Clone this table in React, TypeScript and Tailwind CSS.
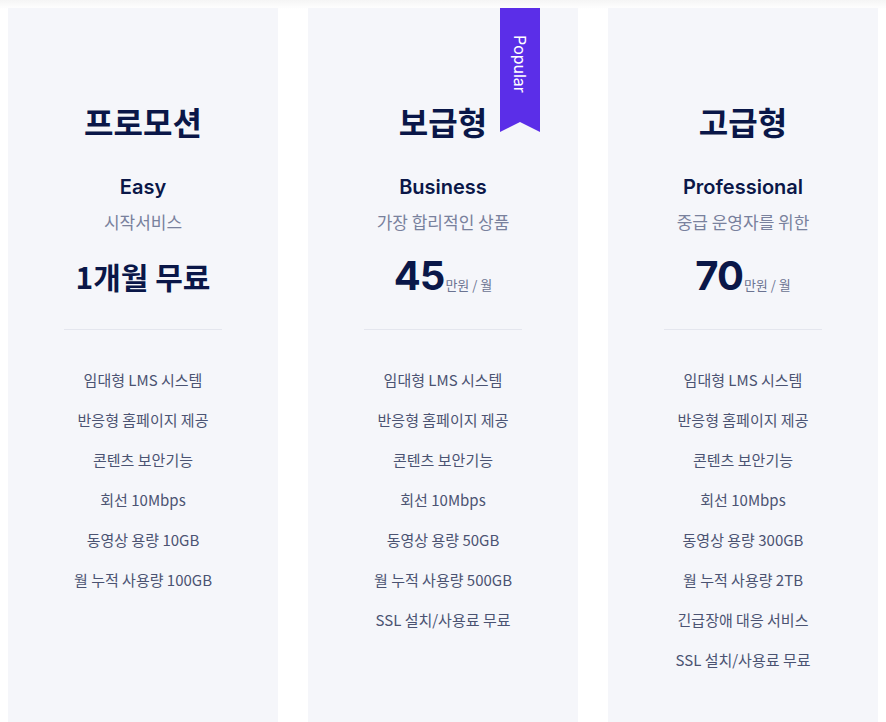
const plans = [
  {
    title: "프로모션",
    name: "Easy",
    desc: "시작서비스",
    price: null as string | null,
    features: ["임대형 LMS 시스템", "반응형 홈페이지 제공", "콘텐츠 보안기능", "회선 10Mbps", "동영상 용량 10GB", "월 누적 사용량 100GB"],
    popular: false,
  },
  {
    title: "보급형",
    name: "Business",
    desc: "가장 합리적인 상품",
    price: "45",
    features: ["임대형 LMS 시스템", "반응형 홈페이지 제공", "콘텐츠 보안기능", "회선 10Mbps", "동영상 용량 50GB", "월 누적 사용량 500GB", "SSL 설치/사용료 무료"],
    popular: true,
  },
  {
    title: "고급형",
    name: "Professional",
    desc: "중급 운영자를 위한",
    price: "70",
    features: ["임대형 LMS 시스템", "반응형 홈페이지 제공", "콘텐츠 보안기능", "회선 10Mbps", "동영상 용량 300GB", "월 누적 사용량 2TB", "긴급장애 대응 서비스", "SSL 설치/사용료 무료"],
    popular: false,
  },
];

export default function App() {
  return (
    <div className="min-h-screen bg-[linear-gradient(to_bottom,#f5f5f5,#ffffff_9px)] px-2 pt-2 font-['Noto_Sans_CJK_KR','Noto_Sans',sans-serif]">
      <div className="grid grid-cols-3 gap-[30px]">
        {plans.map((p) => (
          <div key={p.name} className="relative h-[714px] bg-[#f5f6fa] pt-[93px] text-center">
            {p.popular && (
              <div className="absolute top-0 right-[38px] h-[124px] w-[40px] bg-[#5b2ee8] [clip-path:polygon(0_0,100%_0,100%_100%,50%_92%,0_100%)]">
                <span className="absolute top-[27px] left-[31px] origin-top-left rotate-90 whitespace-nowrap font-['Inter',sans-serif] text-[16px] leading-[22px] text-white">
                  Popular
                </span>
              </div>
            )}
            <h2 className="text-[32px] font-bold leading-[40px] text-[#0a1748]">{p.title}</h2>
            <div className="mt-[32px] font-['Inter',sans-serif] text-[20px] font-semibold leading-[28px] text-[#0a1748]">{p.name}</div>
            <div className="mt-[9px] text-[17px] leading-[24px] text-[#79819d]">{p.desc}</div>
            <div className="mt-[18px] flex h-[48px] items-center justify-center">
              {p.price ? (
                <div className="flex items-baseline">
                  <span className="font-['Inter',sans-serif] text-[40px] font-bold leading-[48px] tracking-[-1px] text-[#0a1748]">{p.price}</span>
                  <span className="ml-[1px] text-[13px] text-[#6b7391]">만원 / 월</span>
                </div>
              ) : (
                <span className="text-[30px] font-bold leading-[48px] text-[#0a1748]">1개월 무료</span>
              )}
            </div>
            <div className="mx-auto mt-[29px] h-px w-[158px] bg-[#e4e6ee]" />
            <ul className="mt-[38px] flex flex-col gap-[16px]">
              {p.features.map((f) => (
                <li key={f} className="text-[15px] leading-[24px] text-[#4b5372]">{f}</li>
              ))}
            </ul>
          </div>
        ))}
      </div>
    </div>
  );
}
